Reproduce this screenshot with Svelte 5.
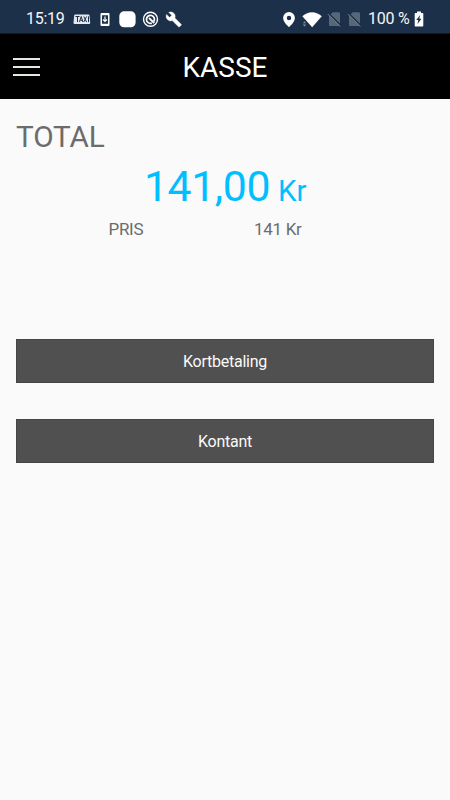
<script>
  const methods = ['Kortbetaling', 'Kontant'];
</script>

<div class="screen">
  <div class="status">
    <span class="time">15:19</span>
    <svg class="notifications" width="110" height="20" viewBox="73 9 110 20" aria-hidden="true">
      <path d="M75.300 14.500h13q1 0 1.200 1l.7 7.500q0 1-1 1H74.500q-1 0-1-1l.7-7.500q.1-1 1.100-1Z" fill="#e4e7eb" />
      <path d="M75.500 16.500h4M77.500 16.500v5.500M79.500 22l1.700-5.500 1.700 5.500M80.500 20.300h2M83.800 16.500l2.800 5.500M86.600 16.500l-2.800 5.500M88.500 16.300v5.800" fill="none" stroke="#1c3149" stroke-width="1" />
      <path fill-rule="evenodd" d="M101.500 13h7q1 0 1 1v11q0 1-1 1h-7q-1 0-1-1V14q0-1 1-1ZM102 15.200v8.600h6v-8.600Z" fill="#fff" />
      <path d="M105 16.500v4.500M103 19.500l2 2 2-2" fill="none" stroke="#fff" stroke-width="1.200" />
      <rect x="119.300" y="11.300" width="16.300" height="16" rx="4.800" fill="#fff" />
      <circle cx="150.500" cy="19.200" r="7" fill="none" stroke="#fff" stroke-width="1.400" />
      <path d="M153.800 21.500a4 4 0 1 0-2 1.600" fill="none" stroke="#fff" stroke-width="1.700" />
      <path d="M149 18l5.200 5" stroke="#fff" stroke-width="1.800" />
      <g transform="translate(165.500 11.200) scale(.69)">
        <path d="M22.700 19l-9.100-9.100c.9-2.300.4-5-1.500-6.900-2-2-5-2.400-7.400-1.300L9 6 6 9 1.600 4.700C.4 7.100.9 10.100 2.900 12.100c1.900 1.900 4.600 2.400 6.900 1.500l9.100 9.100c.4.4 1 .4 1.400 0l2.300-2.300c.5-.4.5-1.100.1-1.400z" fill="#fff" stroke="#fff" stroke-width=".6" />
      </g>
    </svg>
    <svg class="signals" width="82" height="20" viewBox="281 9 82 20" aria-hidden="true">
      <path fill-rule="evenodd" d="M289 12a5.900 5.900 0 0 0-5.900 5.900c0 4.200 5.900 9.100 5.900 9.100s5.900-4.900 5.900-9.100A5.900 5.900 0 0 0 289 12ZM289 15.800a2.200 2.200 0 1 1 0 4.400a2.200 2.200 0 0 1 0-4.400Z" fill="#fff" />
      <path d="M302.300 16.200Q312 8.300 321.800 16.200L312.200 27.300Z" fill="#fff" />
      <path d="M302.700 23.300l2-2 1.300 2ZM302.700 24.500h3.600l-1.800 2Z" fill="#8795a5" />
      {#each [0, 20] as shift}
        <g transform={`translate(${shift} 0)`}>
          <path d="M332.700 12.300h6q1.300 0 1.300 1.300v11.300q0 1-1 1h-9q-1 0-1-1v-9Z" fill="#566779" />
          <path d="M328.500 13.200l12.200 12.200" stroke="#1c3149" stroke-width="1.500" />
          <path d="M327.800 14l12.500 12.500" stroke="#718090" stroke-width="1" />
        </g>
      {/each}
    </svg>
    <span class="percent">100 %</span>
    <svg class="battery" width="12" height="20" viewBox="413 9 12 20" aria-hidden="true">
      <path d="M417 11.500h4v1.500h1.500q.8 0 .8.800v11.700q0 1-.8 1h-7q-.8 0-.8-1V13.800q0-.8.8-.8h1.500Z" fill="#fff" />
      <path d="M420.200 15l-4 5h2.100l-.8 4 4-5.200h-2.200Z" fill="#1c3149" />
    </svg>
  </div>

  <header>
    <button class="menu" aria-label="Menu"><i></i><i></i><i></i></button>
    <h1>KASSE</h1>
  </header>

  <main>
    <h2>TOTAL</h2>
    <div class="amount"><span class="number">141,00</span><span class="unit">Kr</span></div>
    <div class="price"><span class="label">PRIS</span><span>141 Kr</span></div>
    <div class="methods">
      {#each methods as method}
        <button class="pay">{method}</button>
      {/each}
    </div>
  </main>
</div>

<style>
  .screen {
    width: 450px;
    height: 800px;
    overflow: hidden;
    background: #fafafa;
    font-family: Roboto, sans-serif;
    color: #6c6c6c;
  }
  .status {
    box-sizing: border-box;
    height: 34px;
    padding: 9px 0 0 26px;
    display: flex;
    background: #1c3149;
    border-bottom: 1px solid #0e1924;
    color: #f4f6f8;
    font-size: 16px;
    letter-spacing: -.25px;
    line-height: 20px;
    white-space: nowrap;
  }
  .status svg { display: block; flex: none; }
  .time { width: 47px; }
  .signals { margin-left: 98px; }
  .percent { width: 45px; margin-left: 5px; }
  header {
    height: 65px;
    display: grid;
    grid-template-columns: 52px 1fr 52px;
    align-items: center;
    background: #000;
    color: #fff;
  }
  .menu {
    width: 40px;
    height: 30px;
    padding: 0 0 0 13px;
    border: 0;
    background: none;
    display: flex;
    flex-direction: column;
    justify-content: center;
    gap: 6px;
  }
  .menu i { width: 26.500px; height: 2px; background: #e4e8e2; }
  h1 {
    margin: 2px 0 0;
    text-align: center;
    font-size: 28px;
    line-height: 34px;
    font-weight: 400;
  }
  main { padding: 20px 16px 0; }
  h2 { margin: 0; font-size: 29.700px; letter-spacing: -.15px; line-height: 36px; font-weight: 380; }
  .amount {
    height: 50px;
    margin-top: 6px;
    padding-left: 128px;
    display: flex;
    align-items: baseline;
    color: #00bfff;
    line-height: 50px;
  }
  .number { font-size: 42.800px; letter-spacing: -.45px; }
  .unit { margin-left: 8px; font-size: 29.500px; }
  .price {
    display: flex;
    margin-top: 7px;
    padding-left: 92.500px;
    font-size: 17px;
    letter-spacing: -.3px;
    line-height: 22px;
  }
  .label { width: 145.500px; }
  .methods { margin-top: 99px; display: flex; flex-direction: column; gap: 36px; }
  .pay {
    height: 44px;
    padding: 2px 0 0;
    border: 1px solid #454545;
    background: #505050;
    color: #fafafa;
    font: 400 16px/20px Roboto, sans-serif;
    letter-spacing: -.25px;
  }
</style>
